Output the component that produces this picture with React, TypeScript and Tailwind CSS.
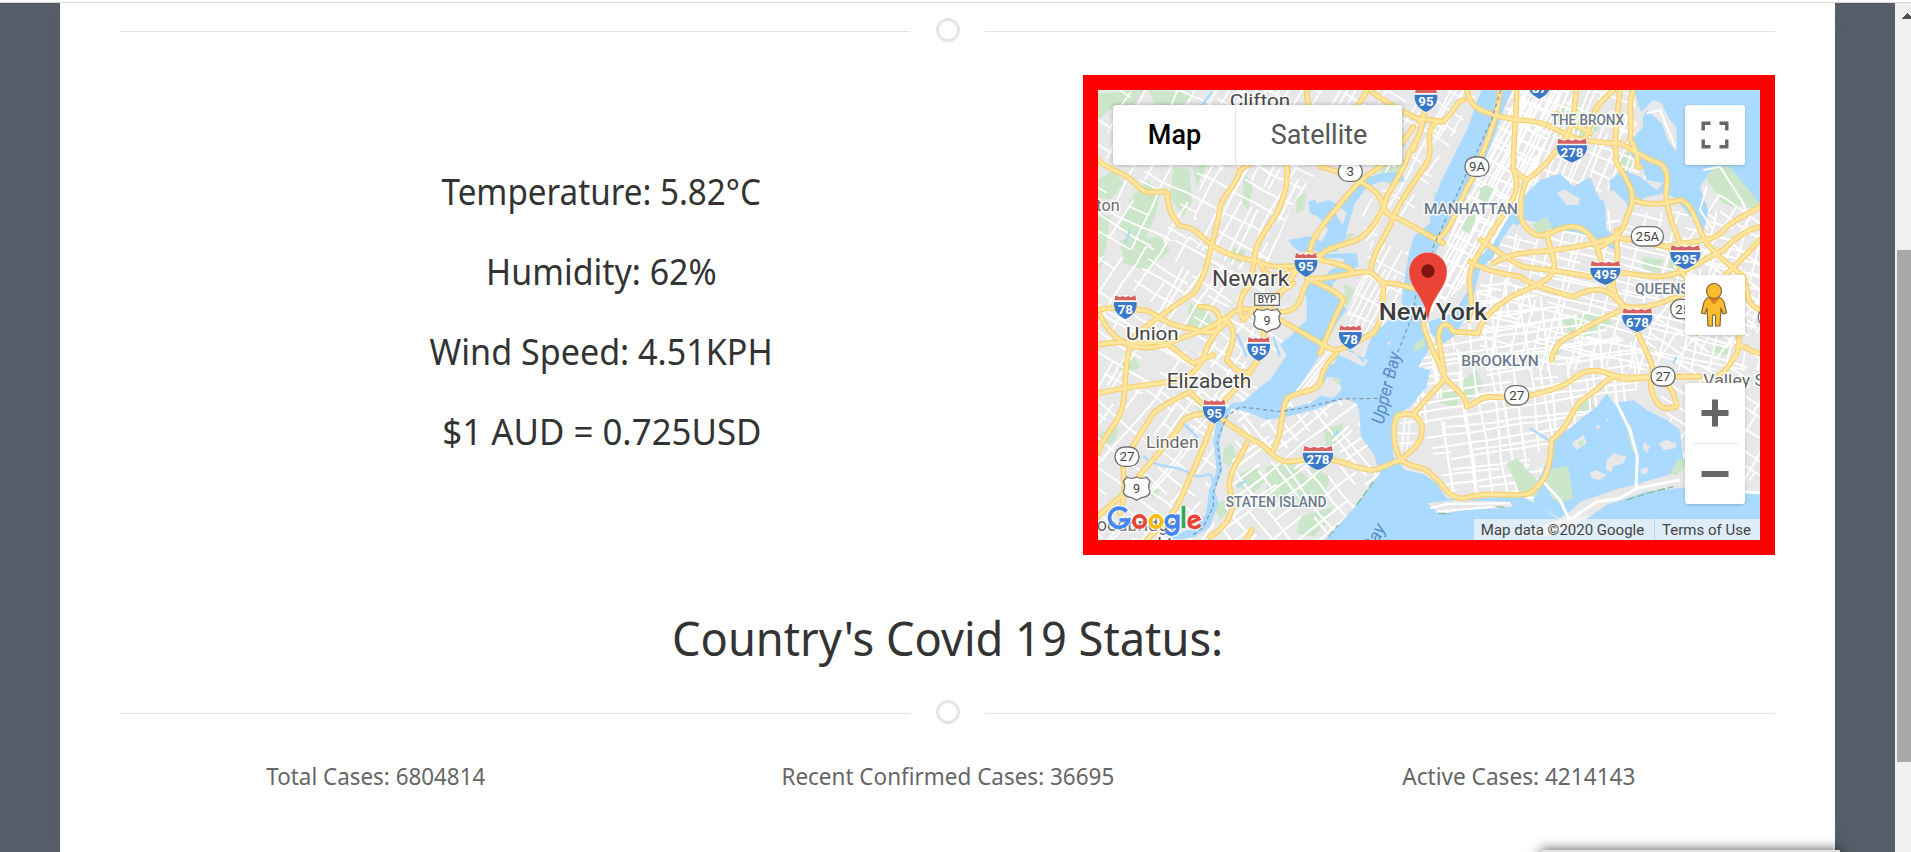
import React from "react";

type Pt = [number, number];

function rng(seed: number) {
  let s = seed;
  return () => {
    s = (s * 16807) % 2147483647;
    return s / 2147483647;
  };
}

/* Irregular street grid covering a square box, rotated around its centre. */
function grid(cx: number, cy: number, size: number, angle: number, a: number, b: number, seed: number, drop = 0.25) {
  const r = rng(seed);
  const t = (angle * Math.PI) / 180;
  const c = Math.cos(t);
  const s = Math.sin(t);
  const p = (x: number, y: number): Pt => [cx + x * c - y * s, cy + x * s + y * c];
  let d = "";
  const step = 70;
  const run = (gap: number, flip: boolean) => {
    for (let v = -size / 2; v < size / 2; v += gap * (0.6 + r() * 0.8)) {
      let open = false;
      let w = v;
      for (let u = -size / 2; u < size / 2; u += step) {
        w += (r() - 0.5) * gap * 0.3;
        const q = flip ? p(w, u) : p(u, w);
        if (r() < drop) open = false;
        d += (open ? "L" : "M") + q[0].toFixed(0) + " " + q[1].toFixed(0);
        open = true;
      }
    }
  };
  run(a, false);
  run(b, true);
  return d;
}

const districts = [
  { id: "nw", poly: "54,60 420,60 330,500 54,560", d: grid(230, 300, 760, 28, 52, 58, 11, 0.3), w: 4 },
  { id: "clif", poly: "420,60 900,60 640,400 540,640 330,500", d: grid(640, 330, 820, -62, 32, 46, 23, 0.22), w: 4.5 },
  { id: "newark", poly: "54,560 330,500 540,640 640,740 520,1000 54,960", d: grid(320, 740, 800, 32, 40, 46, 37, 0.25), w: 4.5 },
  { id: "eliz", poly: "54,960 520,960 420,1100 400,1410 54,1410", d: grid(230, 1180, 680, 38, 42, 48, 41, 0.3), w: 4.5 },
  { id: "hudson", poly: "840,500 1010,300 1180,60 1100,60 900,440 800,740 860,800 1000,700 1040,560", d: grid(960, 450, 1000, -62, 22, 54, 55, 0.12), w: 4 },
  { id: "bergen", poly: "900,60 1200,60 1000,420 860,520 840,400", d: grid(1000, 260, 620, -60, 40, 54, 59, 0.3), w: 4 },
  { id: "si", poly: "480,1010 850,980 940,1200 740,1410 420,1410", d: grid(690, 1210, 620, -38, 38, 42, 61, 0.28), w: 5 },
  { id: "manh", poly: "1300,60 1450,60 1330,420 1160,640 1040,740 1100,520", d: grid(1220, 380, 900, -62, 13, 34, 71, 0.04), w: 5.5 },
  { id: "bronx", poly: "1280,60 1660,60 1700,330 1500,380 1330,400", d: grid(1480, 230, 560, -68, 24, 36, 83, 0.14), w: 4.5 },
  { id: "queens", poly: "1200,580 1340,440 1900,420 2040,480 2040,900 1200,900", d: grid(1620, 680, 980, 14, 28, 40, 91, 0.18), w: 4.5 },
  { id: "brook", poly: "1040,760 1260,620 1700,840 1660,1000 1420,1100 1360,1290 1110,1280 1000,1000", d: grid(1330, 980, 900, -8, 24, 36, 97, 0.1), w: 5 },
  { id: "east", poly: "1860,360 2040,400 2040,1250 1800,1180 1700,820", d: grid(1920, 800, 980, 34, 38, 46, 103, 0.25), w: 4.5 },
];

const parks = [
  "54,70 190,60 160,110 100,110 54,150",
  "205,60 340,70 300,110 240,130",
  "54,330 100,300 130,340 90,390 54,380",
  "150,390 200,330 240,370 225,440 190,520 150,520 120,470",
  "120,510 240,500 270,540 200,600 130,580",
  "280,290 330,300 335,400 310,440 270,380",
  "340,290 380,285 350,350",
  "54,430 90,440 70,580 54,600",
  "490,310 520,340 505,420 488,400",
  "650,380 680,370 670,420 648,430",
  "330,700 380,720 410,780 370,800 320,760",
  "460,530 495,540 490,580 450,570",
  "790,640 825,660 800,710",
  "900,280 965,285 940,350 900,330",
  "785,495 825,490 800,520",
  "1060,370 1085,360 1090,385 1065,395",
  "1430,100 1520,120 1560,180 1500,200",
  "1320,70 1380,60 1370,100",
  "1610,260 1660,240 1650,330 1620,320",
  "1670,60 1740,60 1700,120 1670,110",
  "1860,250 1940,270 1990,340 1980,420 1930,400 1880,330",
  "1980,330 2040,350 2040,420 1990,410",
  "1690,560 1750,570 1740,610 1690,600",
  "1440,740 1560,730 1600,760 1500,810 1470,790",
  "1380,820 1440,810 1450,840 1400,880",
  "1150,930 1190,900 1210,950 1170,990 1140,960",
  "1075,960 1140,960 1130,1010 1080,1000",
  "1260,990 1310,1000 1290,1015",
  "1905,820 1950,835 1940,855 1900,845",
  "1770,560 1830,590 1810,640 1760,620",
  "560,1190 640,1180 700,1240 680,1300 620,1290 560,1270",
  "690,1190 750,1220 730,1290 700,1290",
  "480,1210 530,1190 560,1230 520,1270 470,1250",
  "660,1340 760,1310 740,1360 700,1400 650,1390",
  "430,1140 455,1120 470,1160 460,1190 430,1180",
  "730,1080 790,1060 780,1110 740,1130",
  "54,1090 120,1070 100,1120 54,1130",
  "110,880 160,850 180,890 130,920",
  "340,1000 390,1000 360,1030",
  "590,980 640,1010 620,1040",
  "400,1310 430,1290 450,1320 420,1350",
  "210,1250 240,1260 220,1290",
  "520,720 560,700 580,750 530,770",
  "1470,1010 1530,980 1545,1015 1490,1040",
];

/* Parks drawn above the street grid. */
const squares = [
  "1200,355 1218,345 1242,356 1220,400 1198,386",
  "1162,440 1185,432 1186,448 1168,492 1143,478",
];

const water = [
  "M1205 60L1296 60L1270 120L1245 195L1215 270L1185 330L1150 400L1110 480L1070 540L1055 620L1045 700L1030 750L1055 820L1040 850L1015 890L1050 900L1040 950L990 1010L950 1035L935 1090L940 1160L975 1200L1030 1212L1070 1240L1100 1285L1140 1290L1270 1280L1330 1280L1440 1350L1500 1340L1560 1310L1660 1270L1790 1240L2040 1265L2040 1410L735 1410L830 1305L900 1210L880 1150L842 1100L838 1020L830 1000L795 985L700 1020L620 1040L560 1050L500 1025L455 1015L430 1070L418 1120L428 1200L405 1260L415 1300L390 1370L345 1400L290 1410L270 1400L350 1370L378 1330L388 1260L410 1200L400 1110L410 1050L455 1000L490 995L540 950L570 930L620 855L600 825L640 790L680 750L680 680L670 650L690 640L720 640L780 690L800 720L770 760L735 830L710 870L665 940L640 975L610 1020L690 1000L740 965L720 925L740 890L765 880L768 850L850 890L865 870L780 830L800 822L835 860L850 880L860 840L875 800L920 755L970 730L965 680L975 620L985 560L1000 500L1050 460L1050 420L1085 330L1130 240L1165 170L1185 110Z",
  "M1660 60L2040 60L2040 400L1990 340L1950 290L1900 290L1860 350L1885 420L1870 490L1840 450L1790 390L1760 370L1700 380L1650 410L1650 450L1620 500L1600 540L1560 510L1500 490L1450 480L1400 475L1330 480L1300 460L1270 500L1240 560L1200 600L1180 680L1160 740L1120 800L1090 820L1050 790L1045 755L1120 730L1165 660L1180 580L1240 520L1280 450L1330 380L1380 330L1440 310L1480 350L1530 320L1560 390L1590 370L1590 330L1630 300L1680 320L1730 360L1750 340L1700 330L1690 300L1650 250L1660 200L1690 170L1680 110Z",
  "M1370 1240L1390 1200L1415 1110L1470 1075L1510 1040L1550 1010L1580 970L1600 1000L1660 990L1700 1020L1760 1050L1800 1080L1810 1170L1780 1210L1680 1240L1600 1270L1540 1290L1490 1310L1440 1345L1360 1300Z",
  "M685 395L705 390L712 400L745 390L778 405L765 430L788 465L798 500L770 545L720 548L700 540L660 545L640 530L625 510L690 498L725 515L745 480L715 440L690 430Z",
  "M725 552L830 550L836 588L795 608L760 640L745 700L715 720L680 690L672 655L725 640L750 600L790 585L790 565L730 565Z",
  "M768 400L800 370L840 330L900 310L965 305L975 335L900 335L862 350L825 400L795 500L780 490L800 430Z",
];

const islands = [
  { p: "1300,480 1330,450 1400,460 1380,490 1320,500", f: "#e8e8e8" },
  { p: "1430,370 1450,358 1500,385 1495,405 1460,405", f: "#e8e8e8" },
  { p: "1355,465 1400,440 1415,470 1380,500", f: "#cbe6c9" },
  { p: "1558,375 1600,360 1640,400 1620,420 1580,410", f: "#e8e8e8" },
  { p: "1575,405 1640,400 1650,450 1610,500 1580,480", f: "#e8e8e8" },
  { p: "1660,150 1720,90 1745,100 1770,150 1790,175 1790,245 1765,215 1745,160 1700,120 1680,160", f: "#e8e8e8" },
  { p: "1475,1120 1510,1095 1520,1120 1490,1140", f: "#e8e8e8" },
  { p: "1490,1122 1510,1110 1508,1130", f: "#cbe6c9" },
  { p: "1580,1170 1600,1150 1640,1160 1630,1180 1600,1190 1595,1205 1578,1200", f: "#e8e8e8" },
  { p: "1636,1060 1652,1065 1668,1150 1655,1140", f: "#cbe6c9" },
  { p: "1528,1210 1548,1200 1580,1215 1560,1230 1536,1225", f: "#e8e8e8" },
  { p: "1545,1068 1560,1066 1556,1080", f: "#e8e8e8" },
  { p: "1576,1050 1584,1046 1582,1056", f: "#e8e8e8" },
  { p: "1692,1115 1710,1130 1700,1150 1688,1135", f: "#e8e8e8" },
  { p: "1736,1120 1760,1110 1790,1120 1786,1135 1750,1140", f: "#e8e8e8" },
  { p: "1680,1200 1700,1190 1705,1205 1690,1215", f: "#e8e8e8" },
  { p: "1770,1210 1790,1172 1820,1165 1815,1190 1790,1215", f: "#cbe6c9" },
  { p: "1345,1130 1370,1150 1400,1130 1405,1180 1380,1195 1350,1190", f: "#e8e8e8" },
  { p: "1390,1235 1420,1195 1465,1190 1480,1285 1440,1300 1420,1290", f: "#cbe6c9" },
  { p: "1280,1180 1310,1165 1380,1240 1370,1280 1320,1270", f: "#cbe6c9" },
  { p: "1450,1350 1500,1295 1620,1255 1800,1215 2040,1235 2040,1265 1830,1250 1700,1265 1580,1305 1520,1345", f: "#e8e8e8" },
  { p: "1065,1320 1040,1300 1130,1290 1290,1295 1300,1310 1250,1315 1150,1320 1085,1332", f: "#e8e8e8" },
  { p: "1320,1395 1430,1350 1540,1335 1400,1400", f: "#f0f0ec" },
  { p: "1005,820 1030,805 1035,830 1000,845", f: "#cbe6c9" },
  { p: "740,920 775,925 785,960 760,985 715,975", f: "#e8e8e8" },
  { p: "755,920 785,930 775,945", f: "#cbe6c9" },
  { p: "920,820 932,815 930,825", f: "#e8e8e8" },
];

const highways = [
  "M54 270C90 305 130 300 170 345S240 350 262 370C265 430 280 440 300 468C350 470 370 510 395 525C440 555 480 565 535 574C570 595 600 590 640 588",
  "M680 60C680 110 700 140 690 180S560 240 480 300C470 350 430 370 420 410C415 470 400 500 395 525C380 590 370 630 340 670C290 700 240 740 170 790C130 850 140 930 130 1000C120 1060 70 1090 54 1150",
  "M620 280C625 320 620 350 610 380S595 420 590 430C560 480 540 500 530 530S520 640 505 650C480 680 470 710 490 750C540 690 590 680 640 640",
  "M860 60C840 110 810 140 720 200",
  "M870 60C930 110 980 130 1010 145S1020 180 1000 240",
  "M720 290C760 300 800 310 850 340S900 380 920 430C950 440 1000 470 1090 520",
  "M1035 110C1030 160 1015 210 990 240C980 280 950 330 920 380C910 430 870 490 830 510C780 530 740 530 720 560C680 540 650 560 650 590",
  "M690 540C700 490 750 440 790 390C820 350 850 320 900 290C950 250 980 200 1000 170",
  "M1010 145L1090 155C1120 130 1130 90 1150 90M1070 155C1030 190 1060 230 1045 270C1010 330 980 360 945 430C920 500 880 540 872 600",
  "M54 720C110 705 160 720 200 722C240 740 270 770 330 775C380 790 410 800 440 750S500 720 590 725S650 670 690 625C750 630 820 605 870 605C900 620 890 640 930 640S990 660 1020 655",
  "M690 560C740 580 800 580 820 605",
  "M680 625C740 650 780 670 790 690C770 730 740 800 720 850",
  "M600 750C640 770 700 810 760 840C800 840 830 810 880 790C910 750 910 700 910 640",
  "M540 580C560 640 610 610 650 600C600 680 560 710 545 760C560 810 545 860 520 890C500 930 450 970 420 1010",
  "M440 750C480 790 450 830 440 870C480 920 510 930 540 850",
  "M54 970C140 950 210 945 300 930C380 900 370 830 400 800C430 760 430 710 360 710",
  "M54 825C110 810 170 820 200 820C270 800 300 860 340 880L400 855",
  "M60 735C90 800 150 860 270 820C320 790 380 790 440 740",
  "M330 965C280 990 240 1010 220 1030C190 1080 160 1120 130 1180C130 1230 140 1270 120 1330",
  "M330 965C350 990 370 1000 400 1030C460 1070 510 1110 540 1120C570 1140 590 1175 620 1175S680 1165 720 1165C780 1165 830 1200 880 1200C920 1190 950 1170 965 1170C1000 1200 1030 1180 1060 1220C1090 1240 1100 1285 1150 1285C1240 1260 1290 1285 1350 1270C1400 1230 1410 1200 1415 1110C1480 1060 1470 1010 1520 980S1580 920 1610 920C1650 940 1700 915 1750 920L1860 920",
  "M400 1030C350 1030 320 1040 310 1050C280 1110 220 1160 160 1240C120 1290 80 1310 54 1340",
  "M400 1050C370 1140 340 1200 300 1290C280 1340 230 1380 200 1410",
  "M500 1120C480 1170 440 1210 450 1260C470 1330 440 1370 390 1400",
  "M580 1140C610 1090 600 1030 620 985C660 960 700 970 720 940C730 890 740 880 770 850",
  "M500 1410C510 1390 510 1385 515 1380",
  "M965 1175C930 1120 940 1030 960 1035C1010 1020 1040 1060 1020 1110C1000 1150 970 1150 965 1175M1000 1035C1040 980 1070 960 1095 925C1070 860 1040 810 1030 760",
  "M1095 925C1130 960 1160 980 1160 1010C1190 1000 1200 980 1230 980C1320 990 1390 970 1440 950S1500 890 1570 905C1620 930 1680 920 1750 920",
  "M1160 60C1170 120 1210 130 1310 150C1420 150 1440 200 1510 210S1600 220 1620 220C1660 240 1700 270 1740 280C1780 310 1750 360 1760 390C1770 470 1800 500 1800 530",
  "M1260 60C1250 160 1220 210 1180 320C1130 400 1120 480 1070 510",
  "M1310 60C1310 140 1300 200 1300 300C1320 340 1310 370 1280 420C1240 480 1200 540 1180 580C1150 640 1190 680 1165 750",
  "M1300 300L1340 330C1400 290 1420 250 1460 200C1490 140 1480 100 1490 60",
  "M1340 330C1310 390 1330 440 1320 430C1330 480 1370 510 1410 490S1500 450 1540 510C1570 560 1560 610 1600 670C1640 720 1650 720 1660 740",
  "M1660 60C1640 110 1660 160 1650 210C1690 260 1660 300 1680 290M1620 60C1610 150 1600 220 1610 280C1640 330 1680 370 1640 440C1630 500 1580 520 1560 530",
  "M1660 390C1710 410 1760 400 1800 390C1840 400 1850 470 1880 520C1920 570 1960 590 1990 620C2010 660 1990 700 2040 720",
  "M1200 510C1240 530 1280 570 1330 590C1400 600 1490 610 1530 620C1600 590 1660 620 1740 620C1830 610 1880 560 1930 540C1970 500 2000 480 2040 470",
  "M1240 580C1300 540 1370 550 1430 540S1560 520 1600 500L1760 530C1840 510 1910 520 1940 470C1980 440 2010 430 2040 410",
  "M1170 575C1210 600 1260 610 1320 620C1360 650 1440 670 1480 680C1560 640 1590 660 1630 710C1700 720 1750 700 1860 650C1910 660 1960 590 2040 510",
  "M1400 490C1410 550 1440 580 1410 620C1360 660 1320 660 1280 690C1230 720 1200 760 1195 790L1120 785C1100 750 1080 760 1075 800L1095 925",
  "M1610 480C1610 550 1620 590 1600 620C1590 680 1640 720 1660 760C1690 830 1710 860 1720 900C1700 940 1720 1010 1760 1015L1790 1010C1780 960 1770 950 1750 930",
  "M1415 870C1420 820 1460 800 1490 790C1530 760 1590 740 1640 710",
  "M1990 750C1960 790 1990 820 1970 850C1940 900 1930 910 1910 920M1970 830C2000 820 2010 850 2040 850",
  "M1770 530C1780 580 1830 620 1840 680S1870 760 1850 790",
  "M1510 210C1540 170 1530 130 1560 100L1600 60M1430 130C1470 160 1500 170 1530 190",
];

const creeks = "M350 130L395 65M135 520L150 480M190 1160C240 1200 280 1180 330 1210S390 1180 400 1240M310 1060L350 1100L330 1130M470 1250L500 1230M950 140L960 200L975 230M500 860L470 790M1180 600L1240 530M1350 1075L1420 1120M1780 880L1790 860M760 1100L775 1080M580 800L600 860";

type Shield = { x: number; y: number; t: string; k: "i" | "o" | "u" };
const shields: Shield[] = [
  { x: 678, y: 586, t: "95", k: "i" },
  { x: 136, y: 713, t: "78", k: "i" },
  { x: 1038, y: 91, t: "95", k: "i" },
  { x: 1378, y: 52, t: "87", k: "i" },
  { x: 1476, y: 243, t: "278", k: "i" },
  { x: 1816, y: 563, t: "295", k: "i" },
  { x: 1576, y: 610, t: "495", k: "i" },
  { x: 1672, y: 752, t: "678", k: "i" },
  { x: 811, y: 803, t: "78", k: "i" },
  { x: 536, y: 838, t: "95", k: "i" },
  { x: 403, y: 1026, t: "95", k: "i" },
  { x: 714, y: 1165, t: "278", k: "i" },
  { x: 811, y: 305, t: "3", k: "o" },
  { x: 1191, y: 290, t: "9A", k: "o" },
  { x: 1702, y: 499, t: "25A", k: "o" },
  { x: 1808, y: 717, t: "25", k: "o" },
  { x: 1310, y: 976, t: "27", k: "o" },
  { x: 1749, y: 919, t: "27", k: "o" },
  { x: 141, y: 1160, t: "27", k: "o" },
  { x: 2071, y: 742, t: "", k: "o" },
  { x: 561, y: 752, t: "9", k: "u" },
  { x: 170, y: 1256, t: "9", k: "u" },
];

function RoadShield({ x, y, t, k }: Shield) {
  if (k === "i") {
    const h = t.length > 2 ? 45 : 34;
    return (
      <g transform={`translate(${x} ${y})`}>
        <path d={`M${-h + 4} -36Q${-h / 2} -30 0 -37Q${h / 2} -30 ${h - 4} -36L${h} -20Q${h + 2} 14 0 36Q${-h - 2} 14 ${-h} -20Z`} fill="#fff" stroke="#fff" strokeWidth="3" />
        <path d={`M${-h + 4} -37L${-h / 2} -31L${-h / 4} -35L0 -31L${h / 4} -35L${h / 2} -31L${h - 4} -37L${h - 1} -22H${-h + 1}Z`} fill="#d96060" />
        <path d={`M${-h} -17H${h}C${h + 3} 12 ${h / 2} 26 0 35C${-h / 2} 26 ${-h - 3} 12 ${-h} -17Z`} fill="#3a78c8" />
        <text y="18" textAnchor="middle" fontSize="40" fontWeight="700" fill="#fff">{t}</text>
      </g>
    );
  }
  if (k === "o") {
    const w = t.length > 2 ? 48 : 36;
    return (
      <g transform={`translate(${x} ${y})`}>
        <rect x={-w} y="-29" width={w * 2} height="58" rx="28" fill="#fff" stroke="#707070" strokeWidth="4" />
        <text y="14" textAnchor="middle" fontSize="40" fontWeight="400" fill="#444">{t}</text>
      </g>
    );
  }
  return (
    <g transform={`translate(${x} ${y})`}>
      <path d="M-30 -35Q-15 -27 0 -35Q15 -27 30 -35L40 -22Q32 -8 40 8Q40 24 14 27L0 35L-14 27Q-40 24 -40 8Q-32 -8 -40 -22Z" fill="#fff" stroke="#707070" strokeWidth="4" />
      <text y="14" textAnchor="middle" fontSize="38" fontWeight="400" fill="#444">{t}</text>
    </g>
  );
}

const labels = [
  { x: 540, y: 110, t: "Clifton", s: 56, w: 400, c: "#4a4a4a", l: 182 },
  { x: 84, y: 423, t: "ton", s: 48, w: 400, c: "#6e6e6e", l: 70 },
  { x: 512, y: 647, t: "Newark", s: 64, w: 400, c: "#454545", l: 232 },
  { x: 217, y: 811, t: "Union", s: 56, w: 400, c: "#454545", l: 158 },
  { x: 387, y: 954, t: "Elizabeth", s: 60, w: 400, c: "#454545", l: 254 },
  { x: 277, y: 1134, t: "Linden", s: 52, w: 400, c: "#6a6a6a", l: 158 },
  { x: 1059, y: 751, t: "New York", s: 74, w: 500, c: "#3c3c3c", l: 326 },
  { x: 1522, y: 166, t: "THE BRONX", s: 42, w: 500, c: "#6b7a8c", l: 220 },
  { x: 1173, y: 433, t: "MANHATTAN", s: 45, w: 500, c: "#6b7a8c", l: 282 },
  { x: 1746, y: 672, t: "QUEENS", s: 45, w: 500, c: "#6b7a8c", l: 162 },
  { x: 1260, y: 888, t: "BROOKLYN", s: 45, w: 500, c: "#6b7a8c", l: 232 },
  { x: 588, y: 1312, t: "STATEN ISLAND", s: 43, w: 500, c: "#6b7a8c", l: 302 },
  { x: 1980, y: 948, t: "Valley Str", s: 48, w: 400, c: "#6a6a6a", l: 220 },
  { x: 172, y: 1382, t: "oodbridge", s: 56, w: 400, c: "#6a6a6a", l: 244 },
  { x: 205, y: 1444, t: "ownship", s: 54, w: 400, c: "#454545", l: 200 },
];

function CityMap() {
  return (
    <svg className="block h-full w-full font-['Roboto','Noto_Sans',sans-serif]" viewBox="54 60 1986 1350">
      <defs>
        {districts.map((s) => (
          <clipPath key={s.id} id={s.id}>
            <polygon points={s.poly} />
          </clipPath>
        ))}
      </defs>
      <rect x="54" y="60" width="1986" height="1350" fill="#e8e8e8" />
      {parks.map((p) => (
        <polygon key={p} points={p} fill="#cbe6c9" />
      ))}
      {districts.map((s) => (
        <path key={s.id} d={s.d} clipPath={`url(#${s.id})`} fill="none" stroke="#fff" strokeWidth={s.w + 1.2} strokeLinejoin="round" />
      ))}
      {squares.map((p) => (
        <polygon key={p} points={p} fill="#cbe6c9" />
      ))}
      {water.map((p) => (
        <path key={p} d={p} fill="#aadaff" />
      ))}
      {islands.map((i) => (
        <polygon key={i.p} points={i.p} fill={i.f} />
      ))}
      <path d={creeks} fill="none" stroke="#aadaff" strokeWidth="7" strokeLinejoin="round" />
      <g fill="none" stroke="#fff" strokeWidth="9" strokeLinejoin="round">
        <path d="M1603 930L1610 1000L1650 1080L1672 1160L1668 1250" />
        <path d="M1390 1235L1440 1290L1468 1350L1550 1295L1620 1285L1670 1255L1800 1230M2040 1268L1990 1266" />
        <path d="M1580 460L1620 450M1585 420L1590 480M1700 130L1740 120L1785 230M1050 1315L1100 1302L1290 1300M1070 1325L1240 1310" strokeWidth="6" />
        <path d="M1870 300L1920 290L1990 400L2010 450M1880 350L1860 420L1900 480" strokeWidth="6" />
        <path d="M640 975L700 900L760 830M655 975L715 900L770 835M670 970L725 905" strokeWidth="6" />
        <path d="M960 1060L1005 1055M950 1090L1010 1090M955 1120L1000 1120M975 1045L965 1140M990 1050L980 1145" strokeWidth="5" />
      </g>
      <path d="M830 1305L880 1235M745 1400L775 1365M1640 1290L1700 1270L1780 1250M1075 1330L1110 1332M1250 1310L1275 1312" stroke="#86bd92" strokeWidth="4" fill="none" strokeDasharray="24 8" />
      <g fill="none" strokeLinecap="round" strokeLinejoin="round">
        {highways.map((p) => (
          <path key={p} d={p} stroke="#f8cf6e" strokeWidth="17" />
        ))}
        {highways.map((p) => (
          <path key={p} d={p} stroke="#ffe69f" strokeWidth="10" />
        ))}
      </g>
      <path d="M1262 60L1235 150L1160 310L1060 530L1045 600M1010 655L1000 730L960 830L930 900L900 985L780 987L690 1010L600 1025L480 1010L440 1040L412 1110L422 1200L400 1270L400 1310L370 1370L340 1395" fill="none" stroke="#8495a8" strokeWidth="3.5" strokeDasharray="12 9" />
      {shields.map((s) => (
        <RoadShield key={`${s.x}-${s.y}`} {...s} />
      ))}
      <g transform="translate(561 688)">
        <rect x="-37" y="-17" width="74" height="35" fill="#fff" stroke="#707070" strokeWidth="4" />
        <text y="11" textAnchor="middle" fontSize="30" fontWeight="500" fill="#505050">BYP</text>
      </g>
      <g textAnchor="middle" stroke="#fff" strokeWidth="9" strokeLinejoin="round" paintOrder="stroke">
        {labels.map((l) => (
          <text key={l.t} x={l.x} y={l.y} fontSize={l.s} fontWeight={l.w} fill={l.c} textLength={l.l} lengthAdjust="spacingAndGlyphs" strokeOpacity="0.85">{l.t}</text>
        ))}
      </g>
      <g fill="#5b8bc9" fontSize="54" fontStyle="italic" textAnchor="middle">
        <text transform="translate(936 958) rotate(-76)" textLength="220" lengthAdjust="spacingAndGlyphs">Upper Bay</text>
        <text transform="translate(862 1480) rotate(-62)">Lower Bay</text>
      </g>
      <path d="M1044 760C1038 700 1022 690 1000 650C990 634 987 620 987 604A57 57 0 0 1 1101 604C1101 620 1098 634 1088 650C1066 690 1050 700 1044 760Z" fill="#ea4335" stroke="#fff" strokeOpacity="0.5" strokeWidth="2" />
      <circle cx="1044" cy="603" r="20" fill="#811411" />
    </svg>
  );
}

const shadow = "shadow-[0_1px_4px_-1px_rgba(0,0,0,0.3)]";

function MapPanel() {
  return (
    <div className="relative h-[480px] w-[692px] shrink-0 overflow-hidden border-[15px] border-[#ff0000] font-['Roboto','Noto_Sans',sans-serif]">
      <CityMap />
      <div className="absolute top-[15px] left-[15px] flex h-[60px] overflow-hidden rounded-[3px] bg-white text-[27px] shadow-[0_0_4px_rgba(0,0,0,0.3)]">
        <div className="flex w-[123px] items-center justify-center border-r border-[#e6e6e6] pl-px font-medium text-black">Map</div>
        <div className="flex w-[166px] items-center justify-center text-[#565656]">Satellite</div>
      </div>
      <div className={`absolute top-[15px] right-[15px] flex size-[60px] items-center justify-center rounded-[3px] bg-white ${shadow}`}>
        <svg className="size-[28px]" viewBox="0 0 28 28" fill="none" stroke="#666" strokeWidth="3.4">
          <path d="M2.200 9.500V2.200H9.500M18.500 2.200H25.800V9.500M25.800 18.500V25.800H18.500M9.500 25.800H2.200V18.500" />
        </svg>
      </div>
      <div className={`absolute top-[185px] right-[15px] flex size-[60px] items-center justify-center rounded-[3px] bg-white ${shadow}`}>
        <svg className="mr-[2px] h-[46px] w-[28px]" viewBox="0 0 28 46">
          <path d="M7 16L4 20L1.500 31L5 32L7 26L8 44H12.500V33H15.500V44H20L21 26L23 32L26.500 31L24 20L21 16Z" fill="#fbbc2c" stroke="#806a35" strokeWidth="1.200" strokeLinejoin="round" />
          <path d="M8 15H20L14 23Z" fill="#e07b28" />
          <circle cx="14" cy="9" r="7.500" fill="#fbbc2c" stroke="#806a35" strokeWidth="1.200" />
        </svg>
      </div>
      <div className={`absolute top-[293px] right-[15px] flex h-[121px] w-[60px] flex-col items-center rounded-[3px] bg-white ${shadow}`}>
        <svg className="h-[60px] w-[28px]" viewBox="0 0 28 60" fill="#666">
          <path d="M0.500 27H11V16.500H17V27H27.500V33H17V43.500H11V33H0.500Z" />
        </svg>
        <div className="h-px w-[45px] bg-[#e6e6e6]" />
        <svg className="h-[60px] w-[28px]" viewBox="0 0 28 60" fill="#666">
          <path d="M0.500 27H27.500V33H0.500Z" />
        </svg>
      </div>
      <svg className="absolute bottom-[2px] left-[10px] h-[32px] w-[96px] overflow-visible" viewBox="0 0 96 32" fill="none" strokeWidth="3.7">
        <g stroke="#fff" strokeOpacity="0.6" strokeWidth="6.500">
          <path d="M18.500 5.500A9.600 9.600 0 1 0 20.500 14H11.500M69.800 8.500V21C69.800 29 61 30 58.500 24.500M75.500 0V22M81 17.500L91 13C89 8.500 81 9.500 81 16C81 22.500 89 23 92 18.500" />
          <circle cx="31.500" cy="15.500" r="5.600" />
          <circle cx="48" cy="15.500" r="5.600" />
          <circle cx="64" cy="15.500" r="5.600" />
        </g>
        <path d="M18.500 5.500A9.600 9.600 0 1 0 20.500 14H11.500" stroke="#4285f4" />
        <circle cx="31.500" cy="15.500" r="5.600" stroke="#ea4335" />
        <circle cx="48" cy="15.500" r="5.600" stroke="#fbbc05" />
        <circle cx="64" cy="15.500" r="5.600" stroke="#4285f4" />
        <path d="M69.800 8.500V21C69.800 29 61 30 58.500 24.500" stroke="#4285f4" />
        <path d="M75.500 0V22" stroke="#34a853" />
        <path d="M81 17.500L91 13C89 8.500 81 9.500 81 16C81 22.500 89 23 92 18.500" stroke="#ea4335" strokeWidth="3.400" />
      </svg>
      <div className="absolute right-0 bottom-0 flex h-[21px] gap-px text-[15px] leading-[22px] text-[#444]">
        <span className="w-[180px] bg-[#f5f5f5]/70 pr-[3px] text-center">Map data ©2020 Google</span>
        <span className="w-[105px] bg-[#f5f5f5]/70 pr-[2px] text-center">Terms of Use</span>
      </div>
    </div>
  );
}

function Divider() {
  return (
    <div className="flex h-6 items-center justify-between">
      <div className="mt-[3px] h-px w-[790px] bg-[#e5e5e5]" />
      <div className="size-6 rounded-full border-[3px] border-[#e5e5e5]" />
      <div className="mt-[3px] h-px w-[790px] bg-[#e5e5e5]" />
    </div>
  );
}

export default function App() {
  return (
    <div className="relative flex h-[852px] w-[1911px] flex-col overflow-hidden bg-white font-['Noto_Sans','Open_Sans',sans-serif]">
      <div className="h-[3px] shrink-0 border-b border-[#d9d9dd] bg-white" />
      <div className="flex min-h-0 flex-1">
        <div className="flex flex-1 justify-center overflow-hidden bg-[#575e69]">
          <main className="w-[1775px] bg-white px-[60px] pt-[15px] shadow-[0_0_30px_rgba(60,80,100,0.15)]">
            <Divider />
            <section className="mt-[33px] flex h-[480px]">
              <div className="flex flex-1 flex-col items-center pt-[77px] text-[36px] leading-[80px] whitespace-nowrap text-[#333]">
                <p className="scale-x-[0.922]">Temperature: 5.82°C</p>
                <p className="scale-x-[0.942]">Humidity: 62%</p>
                <p className="scale-x-[0.947]">Wind Speed: 4.51KPH</p>
                <p className="scale-x-[0.968]">$1 AUD = 0.725USD</p>
              </div>
              <MapPanel />
            </section>
            <h1 className="mt-[50px] flex h-[70px] justify-center text-[48px] leading-[66px] whitespace-nowrap text-[#333]">
              <span className="scale-x-[0.942]">Country's Covid 19 Status:</span>
            </h1>
            <div className="pt-[25px]">
              <Divider />
            </div>
            <div className="mt-[34px] grid grid-cols-3 gap-[60px] text-center text-[24px] leading-9 whitespace-nowrap text-[#666]">
              <p className="scale-x-[0.933]">Total Cases: 6804814</p>
              <p className="scale-x-[0.936]">Recent Confirmed Cases: 36695</p>
              <p className="scale-x-[0.942]">Active Cases: 4214143</p>
            </div>
          </main>
        </div>
        <div className="flex w-4 flex-col bg-[#f0f0f0] pl-0.5">
          <svg className="mt-[10px] ml-[5px] h-[6px] w-[9px]" viewBox="0 0 9 6" shapeRendering="crispEdges">
            <path d="M0 6L5.500 0L11 6Z" fill="#505050" />
          </svg>
          <div className="mt-[231px] h-[512px] bg-[#a8a8a8]" />
        </div>
      </div>
      <div className="absolute top-[850px] left-[1541px] h-10 w-[299px] bg-[#e1e1e1] shadow-[0_0_12px_rgba(0,0,0,0.7)]" />
    </div>
  );
}
